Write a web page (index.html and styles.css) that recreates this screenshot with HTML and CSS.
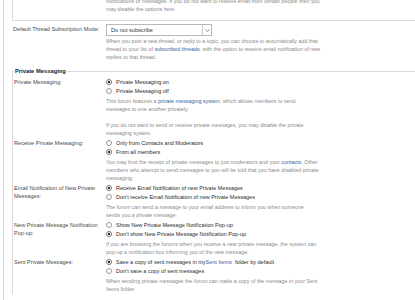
FILE: index.html
```html
<!DOCTYPE html>
<html lang="en">
<head>
<meta charset="utf-8">
<title>Edit Options</title>
<link rel="stylesheet" href="styles.css">
</head>
<body>
<div class="page">
  <div class="section prev">
    <div class="row">
      <div class="label"></div>
      <div class="right">
        <p class="desc">notifications or messages. If you do not want to receive email from certain people then you<br>may disable the options here</p>
      </div>
    </div>
  </div>

  <div class="row standalone">
    <label class="label" for="subscribe">Default Thread Subscription Mode:</label>
    <div class="right">
      <div class="select" id="subscribe">
        <span class="value">Do not subscribe</span>
        <span class="caret"><svg width="5" height="3" viewBox="0 0 5 3"><path d="M0.5 0.5 L2.5 2.5 L4.5 0.5" fill="none" stroke="#666" stroke-width="0.8"/></svg></span>
      </div>
      <p class="desc">When you post a new thread, or reply to a topic, you can choose to automatically add that<br>thread to your list of <a href="#">subscribed threads</a>, with the option to receive email notification of new<br>replies to that thread.</p>
    </div>
  </div>

  <fieldset class="group">
    <legend>Private Messaging</legend>

    <div class="row">
      <div class="label">Private Messaging:</div>
      <div class="right">
        <label class="opt"><input class="radio" type="radio" name="pm" checked> Private Messaging on</label>
        <label class="opt"><input class="radio" type="radio" name="pm"> Private Messaging off</label>
        <p class="desc">This forum features a <a href="#">private messaging system</a>, which allows members to send<br>messages to one another privately.</p>
        <p class="desc gap">If you do not want to send or receive private messages, you may disable the private<br>messaging system.</p>
      </div>
    </div>

    <div class="row">
      <div class="label">Receive Private Messaging:</div>
      <div class="right">
        <label class="opt"><input class="radio" type="radio" name="receive"> Only from Contacts and Moderators</label>
        <label class="opt"><input class="radio" type="radio" name="receive" checked> From all members</label>
        <p class="desc">You may limit the receipt of private messages to just moderators and your <a href="#">contacts</a>. Other<br>members who attempt to send messages to you will be told that you have disabled private<br>messaging.</p>
      </div>
    </div>

    <div class="row">
      <div class="label">Email Notification of New Private<br>Messages:</div>
      <div class="right">
        <label class="opt"><input class="radio" type="radio" name="email" checked> Receive Email Notification of new Private Messages</label>
        <label class="opt"><input class="radio" type="radio" name="email"> Don't receive Email Notification of new Private Messages</label>
        <p class="desc">The forum can send a message to your email address to inform you when someone<br>sends you a private message.</p>
      </div>
    </div>

    <div class="row">
      <div class="label">New Private Message Notification<br>Pop-up:</div>
      <div class="right">
        <label class="opt"><input class="radio" type="radio" name="popup"> Show New Private Message Notification Pop-up</label>
        <label class="opt"><input class="radio" type="radio" name="popup" checked> Don't show New Private Message Notification Pop-up</label>
        <p class="desc">If you are browsing the forums when you receive a new private message, the system can<br>pop-up a notification box informing you of the new message.</p>
      </div>
    </div>

    <div class="row">
      <div class="label">Sent Private Messages:</div>
      <div class="right">
        <label class="opt"><input class="radio" type="radio" name="sent" checked> Save a copy of sent messages in my <a href="#">Sent Items</a>&nbsp; folder by default</label>
        <label class="opt"><input class="radio" type="radio" name="sent"> Don't save a copy of sent messages</label>
        <p class="desc">When sending private messages the forum can make a copy of the message in your Sent<br>Items folder.</p>
      </div>
    </div>
  </fieldset>
</div>
</body>
</html>
```

FILE: styles.css
```css
html, body {
  margin: 0;
  padding: 0;
  overflow: hidden;
  background: #fff;
}

body {
  font-family: "Liberation Sans", Arial, sans-serif;
  color: #4a4a4a;
}

.page {
  height: 300px;
  margin-left: 3px;
  padding-left: 8px;
  border-left: 1px solid #d6d6d6;
  overflow: hidden;
}

.row {
  display: grid;
  grid-template-columns: 93px 1fr;
}

.label {
  font-size: 5.6px;
  line-height: 8px;
  padding-top: 1px;
  color: #4a4a4a;
}

.right {
  min-width: 0;
}

.desc {
  margin: 0;
  font-size: 5.35px;
  line-height: 8px;
  color: #8a8a8a;
  white-space: nowrap;
}

.desc.gap {
  margin-top: 8px;
}

a {
  color: #3563a8;
  text-decoration: none;
}

/* previous section (cut off at top) */
.prev {
  margin-top: -3px;
  margin-right: -60px;
  padding-bottom: 7px;
  border-left: 1px solid #dcdcdc;
  border-bottom: 1px solid #dcdcdc;
}

.standalone {
  padding-left: 1px;
  margin-top: 3px;
}

.select {
  display: flex;
  align-items: stretch;
  width: 106px;
  height: 12px;
  box-sizing: border-box;
  border: 1px solid #b8b8b8;
  background: #fff;
  margin-bottom: 1px;
}

.select .value {
  flex: 1;
  padding-left: 4px;
  font-size: 5.6px;
  line-height: 10px;
  color: #333;
}

.select .caret {
  width: 8px;
  border-left: 1px solid #cfcfcf;
  display: flex;
  align-items: center;
  justify-content: center;
}

/* fieldset */
.group {
  margin: 6px -60px 0 0;
  padding: 2px 0 0 1px;
  border: 1px solid #dcdcdc;
  border-right: 0;
  border-bottom: 0;
}

.group legend {
  padding: 0 1px;
  font-size: 5.8px;
  line-height: 8px;
  font-weight: bold;
  color: #222;
}

.group .row {
  grid-template-columns: 92px 1fr;
  padding-bottom: 1px;
}

.group .label {
  padding-top: 1px;
}

.opt {
  display: flex;
  align-items: center;
  height: 9.5px;
  font-size: 5.5px;
  color: #2a2a2a;
  white-space: nowrap;
}

.group .opt + .opt + .desc {
  margin-top: 1px;
}

.radio {
  appearance: none;
  -webkit-appearance: none;
  width: 6px;
  height: 6px;
  margin: 0 4px 0 0;
  box-sizing: border-box;
  border: 1px solid #9a9a9a;
  border-radius: 50%;
  background: #fff;
  flex: none;
}

.radio:checked {
  background: radial-gradient(circle, #333 0, #333 1.2px, #fff 1.6px);
  border-color: #777;
}
```
